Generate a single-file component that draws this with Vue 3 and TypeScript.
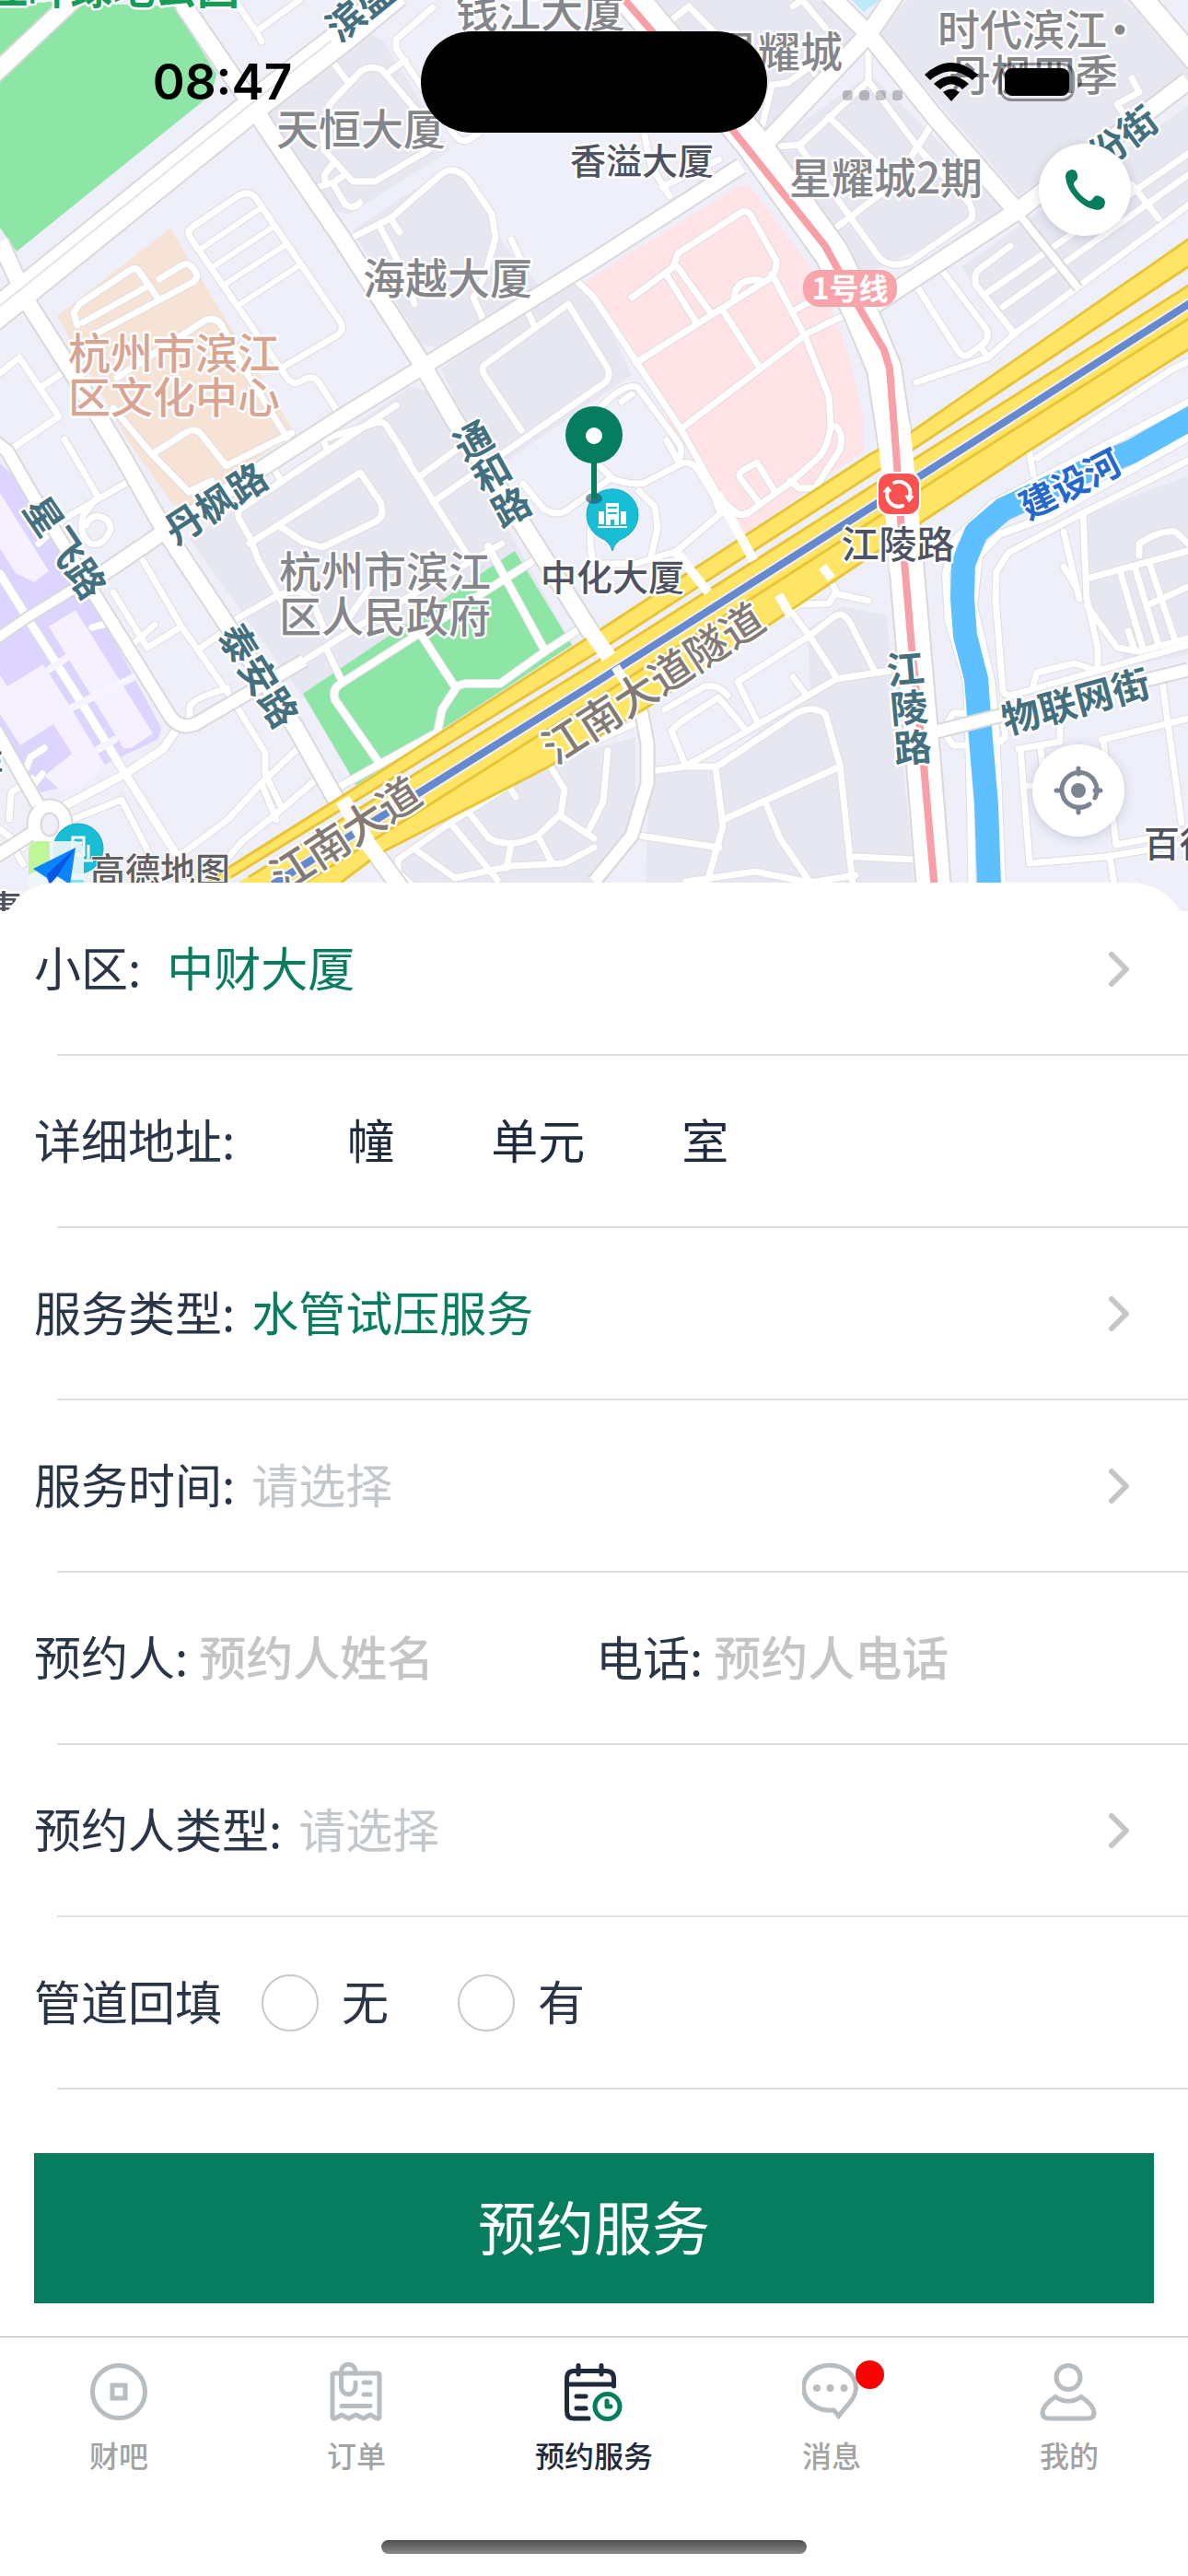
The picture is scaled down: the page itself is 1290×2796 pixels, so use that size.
<script setup lang="ts">
import { ref } from 'vue'

interface Area { fill: string; points: string }
interface Road { d: string; w: number }
interface Label { text: string; x: number; y: number; size: number; tone: string; angle?: number; anchor?: 'start' | 'middle' | 'end' }

const areas: Area[] = [
  { fill: '#e6e7f0', points: '296,117 403,38 415,43 489,163 378,233 362,227 288,123' },
  { fill: '#e6e7f0', points: '383,250 489,180 502,182 545,262 585,310 473,377 457,373' },
  { fill: '#e6e7f0', points: '479,400 617,305 640,310 686,407 550,500 520,490' },
  { fill: '#e6e7f0', points: '206,585 445,420 470,425 560,590 622,700 386,855 360,800' },
  { fill: '#e6e7f0', points: '705,0 890,0 935,40 825,150 760,60' },
  { fill: '#e6e7f0', points: '838,157 945,80 1093,227 935,300 884,217' },
  { fill: '#e6e7f0', points: '951,33 986,0 1221,0 1290,67 1290,90 1106,212' },
  { fill: '#e6e7f0', points: '1044,290 1290,115 1290,225 1106,363 1096,360' },
  { fill: '#e6e7f0', points: '877,683 915,658 940,664 962,667 990,920 993,989 700,989 705,840 777,832 880,748' },
  { fill: '#e6e7f0', points: '420,940 600,825 690,800 690,900 640,989 420,989' },
  { fill: '#e6e7f0', points: '1180,557 1290,517 1290,710 1225,723 1184,657' },
  { fill: '#bceaf8', points: '925,0 955,0 938,13' },
  { fill: '#ffe3e7', points: '636,305 800,203 811,201 820,209 875,283 900,330 920,380 937,450 937,490 805,583 740,480' },
  { fill: '#8de5a6', points: '0,0 189,7 235,80 230,102 18,273 0,247' },
  { fill: '#8de5a6', points: '329,753 559,598 621,700 387,852' },
  { fill: '#f7e3d6', points: '62,343 185,248 320,470 290,490 205,549 188,548 140,480' },
  { fill: '#ddd4ff', points: '0,503 16,518 107,663 175,790 172,802 60,856 45,860 37,853 0,800' },
  { fill: '#f5f1ff', points: '0,535 53,620 37,632 17,622 0,595' },
  { fill: '#f5f1ff', points: '53,680 82,662 166,796 142,812 134,812' },
  { fill: '#f5f1ff', points: '0,733 8,745 47,721 78,770 115,832 86,855 66,858 48,842 78,818 58,786 22,809 0,775' },
]

const minor: Road[] = [
  { w: 7, d: 'M470 8L430 43V53L494 147Q502 156 510 151L522 143' },
  { w: 7, d: 'M252 -4L280 37L284 45M280 33L325 0' },
  { w: 7, d: 'M358 63L376 87M452 120L415 76Q403 70 392 77L358 113L350 140L352 163L383 197H407L465 163M424 77L440 65' },
  { w: 7, d: 'M346 203L362 198L374 190M362 200L375 222Q384 228 391 220M362 177L352 190L354 200' },
  { w: 7, d: 'M378 260L424 237L478 190Q492 178 508 194L534 232L538 258L526 300L514 323L526 350' },
  { w: 7, d: 'M413 247L432 283L450 330M424 237L434 252M555 260L568 287' },
  { w: 7, d: 'M308 398L366 364Q374 358 370 350L277 214Q269 206 258 213L208 247Q202 252 208 260L313 412Q320 419 328 413Q340 406 346 415L370 452' },
  { w: 6, d: 'M218 270L280 228M232 289L294 248M245 308L308 267M261 330L325 288' },
  { w: 7, d: 'M84 353L80 340L86 330L140 294Q148 288 152 296L171 323M90 350L158 312M103 363L210 306Q217 300 211 293Q204 282 194 290L173 303' },
  { w: 7, d: 'M127 410L222 348Q236 342 243 357L263 397L313 477M123 443L165 493L203 469Q213 464 219 472L245 505M247 505L317 470M165 493L205 534L230 522' },
  { w: 7, d: 'M0 405L21 388L64 452L8 490M45 420L70 403M70 477L107 540M144 520L70 563L42 590' },
  { w: 7, d: 'M105 540L90 560Q85 580 98 590Q112 594 120 575Q120 562 105 560Q96 562 94 570' },
  { w: 7, d: 'M350 477L405 460Q416 455 421 464L444 500M350 475L356 490' },
  { w: 7, d: 'M617 330L526 396Q522 400 526 407L566 467M617 330L660 400Q664 412 653 418L470 545M570 333L580 353' },
  { w: 7, d: 'M621 300L645 323L740 467L781 540L816 604' },
  { w: 7, d: 'M645 450Q675 415 692 420L738 482Q742 492 736 500L724 478M675 436L686 428' },
  { w: 7, d: 'M723 27L748 7L790 50M861 7L871 0L896 30M838 93L826 143M838 92L855 90L880 72L888 86' },
  { w: 7, d: 'M943 37V88L900 128L869 157L834 160M943 88L999 163L1052 220Q1060 235 1052 240L988 284Q968 292 955 280L869 160' },
  { w: 7, d: 'M900 127L962 187M908 247L970 200L1015 130M727 213L707 180L700 147M719 203L781 173' },
  { w: 7, d: 'M686 323L731 290L736 275L804 231Q811 226 816 235L843 283Q844 294 836 302L690 394M723 297L756 350M736 290L772 340M785 337L824 398M838 297L875 367L900 430L902 463L908 463Q916 470 912 488L885 530H868L858 522' },
  { w: 7, d: 'M740 465L875 363L900 350L916 343M862 337L890 322M797 322Q800 302 825 304M902 463Q898 490 885 500L858 524L815 555Q803 563 795 553L781 540' },
  { w: 7, d: 'M1015 283L1071 357Q1075 366 1068 373L1052 385Q1046 388 1041 382L995 310M1065 377L1073 388L995 415M1073 388L1102 362L1290 223M1102 363L1060 310Q1056 297 1065 291L1097 267M1073 317L1290 167M1089 333L1290 190M1229 200L1258 237' },
  { w: 7, d: 'M1229 85L1237 100L1213 113L1221 125' },
  { w: 7, d: 'M1126 497L1274 400L1290 393M1114 470L1122 515' },
  { w: 7, d: 'M296 507L306 523M271 590L391 513L413 545Q419 560 408 566L350 594L329 588L302 570M310 660L280 607L273 587L259 562Q257 553 266 549L430 440M436 490L506 600M456 517L520 470' },
  { w: 7, d: 'M255 673L300 647Q330 634 340 655L355 690M330 717L400 673L545 590M354 703L370 737M372 680L400 640' },
  { w: 8, d: 'M411 827L364 760Q360 748 370 742L456 687L588 603M456 687L495 747L480 770L475 795L370 853M495 745L505 742H543L592 707L629 683M530 593L592 707' },
  { w: 9, d: 'M0 623L31 673L95 773L136 840L193 930L210 958M41 873L66 877L136 840L177 813L193 790' },
  { w: 7, d: 'M152 603L197 680L251 757L288 817V840L304 873M123 643L160 703L197 680M218 703L255 677M206 783V767Q210 758 247 747M140 703L168 678M100 681L116 677' },
  { w: 7, d: 'M193 930L247 890L284 850L329 807M225 958L263 913L304 880L350 840M284 850L300 890M32 857L46 840' },
  { w: 7, d: 'M70 893L132 868L178 958M0 900L25 920M10 889L12 860L35 845M25 938L12 915M568 525L590 552Q605 562 618 552L662 520' },
  { w: 7, d: 'M28 835L33 822L48 812' },
  { w: 7, d: 'M432 933L489 893L568 843L600 826L645 805L690 785M432 933V947L458 970M489 893L540 955M510 883L531 910Q555 922 584 907L609 883L613 857L590 820' },
  { w: 7, d: 'M452 923L494 953L555 940L613 937L645 920M555 917L550 942M584 907L600 938M609 886L645 910M542 838L560 865' },
  { w: 7, d: 'M707 837L744 832H777M744 832L805 797L908 737L966 728M744 830L729 793L740 783L780 757Q790 768 810 793M722 770L765 745Q780 742 790 755' },
  { w: 7, d: 'M822 783L801 740L879 690L908 735M847 648L879 690L905 670Q915 662 923 676L949 727M861 660L870 656L900 655L908 642L902 630M910 645L943 652M861 735L876 755' },
  { w: 7, d: 'M777 833L862 776Q880 764 896 775L912 830L929 989M777 833L785 897L768 957M785 890L912 832M694 907L781 920M832 873L847 910L879 957M745 957L820 946L879 958L929 950M929 930L995 933M660 815L655 870L640 900' },
  { w: 7, d: 'M651 506L666 520Q685 527 700 524L740 503Q750 500 757 509L776 540Q780 552 783 557M694 533L711 550L714 573L707 604M643 560Q638 590 645 612L690 612L735 598L783 557M735 600L768 642M822 543L803 518Q802 514 806 511L822 502L841 533' },
  { w: 8, d: 'M1290 437L1077 547L1036 587L1027 623L1030 673L1050 740L1052 790L1054 873L1056 989' },
  { w: 8, d: 'M1290 475L1140 560L1085 580L1063 603L1057 657L1077 743L1081 790L1089 989' },
  { w: 7, d: 'M1290 500L1170 560L1095 600L1082 620L1081 650L1089 750Q1094 758 1104 753L1290 700' },
  { w: 7, d: 'M1176 557L1180 650L1192 703V723M1155 577L1172 650M1155 615L1170 640M1184 627L1290 598M1217 623L1241 703M1233 618L1258 700M1249 614L1276 695M1237 603V590Q1260 575 1276 577L1290 590M1180 657L1213 703L1237 707L1290 693M1250 655L1290 637M1225 685L1232 705' },
  { w: 7, d: 'M1122 743L1126 730L1167 720L1188 727M1025 790L1035 774H1048M1025 795L1035 809H1052M1088 775L1092 800L1080 810' },
  { w: 7, d: 'M1106 813L1151 805V780M1108 813L1118 937L1200 930L1290 915M1130 812L1134 850M1112 853H1130M1196 803L1290 780M1262 740L1283 893M1198 803L1212 917L1290 902M1205 930L1215 989' },
]

const major: Road[] = [
  { w: 13, d: 'M-5 480L8 490L41 547L90 625L135 697L185 778Q195 792 212 786L330 717' },
  { w: 10, d: 'M-5 694L30 670L111 620' },
  { w: 16, d: 'M105 627L177 578L370 453L461 397L645 283L805 180' },
  { w: 13, d: 'M-5 792L41 873M-5 930L37 903M37 895A17 20 0 1 0 71 895A17 20 0 1 0 37 895' },
  { w: 17, d: 'M0 262L16 297L33 333L82 410L132 493L177 573L243 673L321 790L370 877L403 920L436 965' },
  { w: 18, d: 'M195 -8L201 8L255 87L276 117L288 137L370 257L457 393L494 457L568 570L642 687' },
  { w: 18, d: 'M830 157L943 37L975 -10M900 -6L943 37L1015 127L1102 227' },
  { w: 8, d: 'M1102 227L1171 313' },
  { w: 18, d: 'M950 330L1106 228L1290 88' },
  { w: 22, d: 'M1235 -8L1300 68' },
  { w: 13, d: 'M1005 797L1089 776L1290 727' },
  { w: 13, d: 'M680 740L697 775L703 807V850L686 907L645 957' },
  { w: 31, d: 'M-10 345L271 118L372 40L430 -8' },
  { w: 36, d: 'M674 -15L720 40L815 152L903 275L935 340L960 400L972 480L980 563L992 703L1003 830L1016 989' },
]

const crossings = 'M735 600L766 639M781 540L816 604M896 619L900 624M848 650L856 664M671 728L680 742'

const goldLines = [
  'M1300 253L988 470L945 493L645 688L378 860L251 940L225 958',
  'M1300 373L1116 490L949 601L707 765L596 832L411 927L370 958',
  'M1300 283L988 490L951 512L645 710L411 854L251 952',
  'M1300 304L993 498L645 720L270 952',
  'M1300 340L1056 495L645 760L456 880L325 962',
]

const labels: Label[] = [
  { text: '江畔绿地公园', x: 260, y: -13, size: 46, tone: 'park', anchor: 'end' },
  { text: '钱江大厦', x: 587, y: 12, size: 46, tone: 'grey' },
  { text: '天恒大厦', x: 392, y: 140, size: 46, tone: 'grey' },
  { text: '海越大厦', x: 486, y: 302, size: 46, tone: 'grey' },
  { text: '星耀城', x: 846, y: 56, size: 46, tone: 'grey' },
  { text: '时代滨江', x: 1110, y: 32, size: 46, tone: 'grey' },
  { text: '·', x: 1216, y: 32, size: 46, tone: 'grey' },
  { text: '丹枫四季', x: 1122, y: 81, size: 46, tone: 'grey' },
  { text: '星耀城2期', x: 962, y: 193, size: 46, tone: 'grey' },
  { text: '杭州市滨江', x: 189, y: 383, size: 46, tone: 'clay' },
  { text: '区文化中心', x: 189, y: 431, size: 46, tone: 'clay' },
  { text: '杭州市滨江', x: 418, y: 620, size: 46, tone: 'grey' },
  { text: '区人民政府', x: 418, y: 669, size: 46, tone: 'grey' },
  { text: '香溢大厦', x: 697, y: 174, size: 39, tone: 'dark' },
  { text: '中化大厦', x: 665, y: 626, size: 39, tone: 'dark' },
  { text: '江陵路', x: 975, y: 590, size: 41, tone: 'dark' },
  { text: '百得', x: 1242, y: 915, size: 39, tone: 'dark', anchor: 'start' },
  { text: '佳', x: -16, y: 820, size: 39, tone: 'dark' },
  { text: '事', x: 4, y: 985, size: 39, tone: 'dark' },
  { text: '滨盛', x: 391, y: 9, size: 41, tone: 'teal', angle: -39 },
  { text: '份街', x: 1219, y: 149, size: 41, tone: 'teal', angle: -37 },
  { text: '丹枫路', x: 234, y: 546, size: 41, tone: 'teal', angle: -33 },
  { text: '物联网街', x: 1168, y: 761, size: 41, tone: 'teal', angle: -15 },
  { text: '建设河', x: 1162, y: 525, size: 39, tone: 'river', angle: -27 },
  { text: '江南大道', x: 375, y: 905, size: 46, tone: 'brown', angle: -33 },
  { text: '江南大道隧道', x: 709, y: 741, size: 46, tone: 'brown', angle: -33 },
  { text: '通', x: 514, y: 478, size: 41, tone: 'teal', angle: -29 },
  { text: '和', x: 534, y: 513, size: 41, tone: 'teal', angle: -29 },
  { text: '路', x: 555, y: 550, size: 41, tone: 'teal', angle: -29 },
  { text: '星飞路', x: 71, y: 594, size: 41, tone: 'teal', angle: 56 },
  { text: '泰安路', x: 281, y: 733, size: 41, tone: 'teal', angle: 58 },
  { text: '江', x: 983, y: 726, size: 41, tone: 'teal', angle: -5 },
  { text: '陵', x: 987, y: 768, size: 41, tone: 'teal', angle: -5 },
  { text: '路', x: 991, y: 811, size: 41, tone: 'teal', angle: -5 },
]

const building = ref('')
const unit = ref('')
const room = ref('')
const contact = ref('')
const phone = ref('')
const backfill = ref('')
</script>

<template>
  <div class="page">
    <section class="map" aria-label="地图">
      <svg class="canvas" viewBox="0 0 1290 989" preserveAspectRatio="xMidYMid slice">
        <rect width="1290" height="989" fill="#eeeff8" />
        <polygon v-for="(a, i) in areas" :key="'a' + i" :points="a.points" :fill="a.fill" />

        <g fill="none" stroke-linejoin="round" stroke-linecap="round">
          <path v-for="(r, i) in minor" :key="'mc' + i" :d="r.d" stroke="#dddde2" :stroke-width="r.w + 2" />
          <path v-for="(r, i) in minor" :key="'mf' + i" :d="r.d" stroke="#fff" :stroke-width="r.w" />
          <path d="M54 726L74 713M78 768L145 735M107 813L124 803" stroke="#f7f4ff" stroke-width="8" />
        </g>
        <g fill="none" stroke-linejoin="round">
          <path d="M1300 450L1229 490L1159 520L1089 553L1060 578L1046 612L1045 650L1048 690L1060 737L1064 790L1071 873L1075 989" stroke="#5ec0ff" stroke-width="26" />
          <path v-for="(r, i) in major" :key="'jc' + i" :d="r.d" stroke="#d9d9dc" :stroke-width="r.w + 4" />
          <path v-for="(r, i) in major" :key="'jf' + i" :d="r.d" stroke="#fff" :stroke-width="r.w" />
          <path d="M-10 340L271 114L360 44" stroke="#e3e3e3" stroke-width="2" />
          <path d="M-10 84L88 -8" stroke="#d5d9d5" stroke-width="22" />
          <path d="M-10 84L88 -8" stroke="#fff" stroke-width="18" />
        </g>

        <!-- expressway -->
        <polygon fill="#ffe566" points="1300,253 988,470 945,493 645,688 378,860 251,940 205,970 350,970 411,927 596,832 707,765 949,601 1116,490 1300,373" />
        <polygon fill="#eeeff8" points="1300,283 988,490 645,710 411,854 240,960 255,960 415,864 645,720 993,498 1300,304" />
        <g fill="none" stroke="#e9c536" stroke-width="3">
          <path v-for="(d, i) in goldLines" :key="'g' + i" :d="d" />
        </g>
        <path d="M1300 324L1041 490L645 742L296 960" fill="none" stroke="#eeeff8" stroke-width="12" />
        <path d="M1300 324L1041 490L645 742L296 960" fill="none" stroke="#6688cc" stroke-width="8" />
        <path :d="crossings" fill="none" stroke="#fff" stroke-width="10" stroke-linecap="square" />
        <path d="M636 677L661 713M372 868L400 916L436 965" fill="none" stroke="#fff" stroke-width="17" />
        <path d="M970 462L974 500L980 563L984 620" fill="none" stroke="#fff" stroke-width="36" />

        <path d="M676 -3L707 33L797 143L896 267L929 327L960 380L966 400L973 490L978 563L990 703L1003 830L1017 989" fill="none" stroke="#f99fa6" stroke-width="8" />
        <rect x="872" y="293" width="102" height="40" rx="18" fill="#f9a4aa" />
        <text class="tag" x="923" y="313" dy=".38em">1号线</text>

        <!-- metro stop -->
        <rect x="952" y="512" width="48" height="48" rx="13" fill="#fff" />
        <rect x="954" y="514" width="44" height="44" rx="12" fill="#fa5151" />
        <path d="M971 524A12.500 12.500 0 0 1 988 539M980 549A12.500 12.500 0 0 1 964 533" fill="none" stroke="#fff" stroke-width="4" stroke-linecap="round" />
        <path d="M983 538L992 539L987 545ZM959 534L968 533L964 528Z" fill="#fff" stroke="#fff" stroke-linejoin="round" />

        <!-- office markers -->
        <path d="M665 598Q663 588 651 583A28 28 0 1 1 679 583Q667 588 665 598Z" fill="#18bdd6" stroke="#16aac2" stroke-width="1" />
        <path d="M658 546H672V570H667V564H663V570H658ZM650 555H656V569H650ZM674 555H680V569H674ZM649 571H681V573H649Z" fill="#fff" />
        <path d="M660 551H670M660 557H670" stroke="#18bdd6" stroke-width="2" />
        <circle cx="85" cy="921" r="27" fill="#18bdd6" stroke="#16aac2" stroke-width="1" />
        <path d="M79 909H91V928H79ZM81 915H89M96 917V932M90 934H101" fill="none" stroke="#fff" stroke-width="3" />

        <text v-for="(l, i) in labels" :key="'l' + i" class="poi" :class="l.tone" :x="l.x" :y="l.y" dy=".38em"
          :font-size="l.size" :text-anchor="l.anchor ?? 'middle'"
          :transform="l.angle ? `rotate(${l.angle} ${l.x} ${l.y})` : undefined">{{ l.text }}</text>

        <!-- map provider mark -->
        <rect x="31" y="913" width="60" height="60" rx="10" fill="#f1f6f9" opacity=".9" />
        <path d="M41 913H54V938L31 950V923Q31 913 41 913Z" fill="#c0f79a" />
        <path d="M74 955H91V970H74Z" fill="#80e4fa" />
        <path d="M82 920L36 943L51 953L54 960L62 951L76 960Z" fill="#0a84ff" />
        <path d="M82 920L51 949L54 960L62 951Z" fill="#0757e6" />
        <text class="poi provider" x="98" y="944" dy=".38em" font-size="38">高德地图</text>

        <!-- selected place pin -->
        <ellipse cx="645" cy="541" rx="9" ry="6" fill="#24475a" opacity=".6" />
        <path d="M645 500V541" stroke="#067d5f" stroke-width="6" />
        <circle cx="645" cy="472" r="31" fill="#067d5f" />
        <circle cx="645" cy="473" r="9" fill="#fff" />
      </svg>

      <div class="cap"></div>

      <header class="status">
        <time class="clock">08:47</time>
        <div class="island"></div>
        <div class="signals">
          <svg class="cells" viewBox="0 0 66 12"><g fill="#000" opacity=".22"><rect width="11" height="11" rx="4" /><rect x="18" width="11" height="11" rx="4" /><rect x="36" width="11" height="11" rx="4" /><rect x="54" width="11" height="11" rx="4" /></g></svg>
          <svg class="wifi" viewBox="0 0 58 42">
            <path d="M0 13Q29 -13 58 13L52 19Q29 0 6 19Z" />
            <path d="M10 23Q29 6 48 23L41 29Q29 18 17 29Z" />
            <path d="M20 32Q29 25 38 32L29 42Z" />
          </svg>
          <svg class="battery" viewBox="0 0 92 42">
            <rect x="1.500" y="1.500" width="79" height="39" rx="12" fill="none" stroke="#000" stroke-opacity=".4" stroke-width="3" />
            <rect x="6" y="6" width="70" height="30" rx="8" />
            <path d="M85 14Q90 16 90 21T85 28Z" fill-opacity=".45" />
          </svg>
        </div>
      </header>

      <button class="round call" type="button" aria-label="拨打电话">
        <svg viewBox="0 0 44 44" width="44" height="44">
          <path fill="#067d5f" d="M1 8Q1 1 8 0Q13 0 14 6Q15 11 11 13Q9 15 11 19Q17 29 26 34Q29 35 31 31Q33 27 38 29Q44 31 44 36Q43 44 35 44Q22 42 12 31Q2 20 1 8Z" />
        </svg>
      </button>
      <button class="round locate" type="button" aria-label="定位">
        <svg viewBox="0 0 54 54" width="54" height="54" fill="none" stroke="#7c8492" stroke-width="5" stroke-linecap="round">
          <path d="M45 35A19 19 0 1 0 39 42M27 3V9M27 45V51M3 27H9M45 27H51" />
          <circle cx="27" cy="27" r="8" fill="#7c8492" stroke="none" />
        </svg>
      </button>
    </section>

    <form class="sheet" @submit.prevent>
      <div class="row">
        <label for="estate">小区:</label>
        <button id="estate" class="pick wide chosen" type="button">中财大厦
          <svg class="chevron" viewBox="0 0 24 38"><path d="M4 3L20 19L4 35" /></svg>
        </button>
      </div>
      <div class="row address">
        <label for="building">详细地址:</label>
        <input id="building" v-model="building" class="part first" type="text" />
        <label for="building">幢</label>
        <input id="unit" v-model="unit" class="part" type="text" />
        <label for="unit">单元</label>
        <input id="room" v-model="room" class="part" type="text" />
        <label for="room">室</label>
      </div>
      <div class="row">
        <label for="kind">服务类型:</label>
        <button id="kind" class="pick chosen" type="button">水管试压服务
          <svg class="chevron" viewBox="0 0 24 38"><path d="M4 3L20 19L4 35" /></svg>
        </button>
      </div>
      <div class="row">
        <label for="time">服务时间:</label>
        <button id="time" class="pick" type="button">请选择
          <svg class="chevron" viewBox="0 0 24 38"><path d="M4 3L20 19L4 35" /></svg>
        </button>
      </div>
      <div class="row people">
        <div class="half">
          <label for="contact">预约人:</label>
          <input id="contact" v-model="contact" class="field" type="text" placeholder="预约人姓名" />
        </div>
        <div class="half">
          <label for="phone">电话:</label>
          <input id="phone" v-model="phone" class="field" type="tel" placeholder="预约人电话" />
        </div>
      </div>
      <div class="row">
        <label for="role">预约人类型:</label>
        <button id="role" class="pick" type="button">请选择
          <svg class="chevron" viewBox="0 0 24 38"><path d="M4 3L20 19L4 35" /></svg>
        </button>
      </div>
      <div class="row" role="radiogroup" aria-labelledby="backfill">
        <span id="backfill">管道回填</span>
        <label class="option"><input v-model="backfill" type="radio" name="backfill" value="no" />无</label>
        <label class="option"><input v-model="backfill" type="radio" name="backfill" value="yes" />有</label>
      </div>
      <button class="submit" type="submit">预约服务</button>
    </form>

    <nav class="tabs">
      <a href="#home" class="tab">
        <svg viewBox="0 0 64 64"><circle cx="32" cy="32" r="28.500" /><rect x="25" y="25" width="14" height="14" /></svg>
        财吧
      </a>
      <a href="#orders" class="tab">
        <svg viewBox="0 0 64 64" stroke-linecap="round" stroke-linejoin="round">
          <path d="M6 14Q6 12 8 12H55Q57 12 57 14V59Q57 62 54 61L47 57L39.500 61L31.500 57L23.500 61L16 57L9 61Q6 62 6 59Z" />
          <path d="M31 11V10A7.750 7.750 0 0 0 15.500 10V27A7.750 7.750 0 0 0 31 27V22M40 22H47M40 35H47M16 47.500H47" />
        </svg>
        订单
      </a>
      <a href="#booking" class="tab active" aria-current="page">
        <svg viewBox="0 0 64 64" stroke-linecap="round" stroke-linejoin="round">
          <path d="M26 61H10Q2.500 61 2.500 53V18Q2.500 9.500 10 9.500H45Q53.500 9.500 53.500 18V26M2.500 24H53.500M15 3.500V13M40 3.500V13M13 37H23M13 50H23" />
          <g stroke="#067d5f"><circle cx="46.500" cy="48" r="13.500" /><path d="M46 42V48H50" /></g>
        </svg>
        预约服务
      </a>
      <a href="#messages" class="tab">
        <span class="badged">
          <svg viewBox="0 0 64 64">
            <path d="M33 52A28.500 24.500 0 1 1 58.500 28C58.500 39 49 46 39.500 58.500L34.500 52Z" />
            <g fill="#b7bdc1" stroke="none"><circle cx="16" cy="28" r="4" /><circle cx="30.500" cy="28" r="4" /><circle cx="45.500" cy="28" r="4" /></g>
          </svg>
          <i class="badge"></i>
        </span>
        消息
      </a>
      <a href="#me" class="tab">
        <svg viewBox="0 0 64 64">
          <circle cx="31" cy="16.500" r="13" />
          <path d="M17 37.500Q31 47 45 37.500C52 42 59 49 59 55Q59 61 52 61H10Q3 61 3 55C3 49 10 42 17 37.500Z" />
        </svg>
        我的
      </a>
    </nav>
    <div class="home-bar"></div>
  </div>
</template>

<style>
body {
  margin: 0;
  background: #fff;
}
</style>

<style scoped>
.page {
  --green: #067d5f;
  display: flex;
  flex-direction: column;
  min-height: 100vh;
  background: #fff;
  color: #2a3548;
  font-family: "Noto Sans CJK SC", sans-serif;
  font-size: 51px;
  line-height: 72px;
}
button,
input {
  font: inherit;
  color: inherit;
  border: 0;
  padding: 0;
  margin: 0;
  background: none;
  outline: 0;
}
.map {
  position: relative;
  width: 100%;
  aspect-ratio: 1290 / 989;
  overflow: hidden;
}
.canvas {
  display: block;
  width: 100%;
  height: 100%;
}
.poi {
  font-weight: 500;
  paint-order: stroke;
  stroke: #fff;
  stroke-width: 5px;
  stroke-linejoin: round;
}
.grey { fill: #85868c; }
.dark { fill: #4f5262; }
.clay { fill: #d8a494; }
.teal { fill: #436f7e; font-weight: 700; }
.river { fill: #2468cc; font-weight: 700; }
.brown { fill: #837a73; }
.park { fill: #169c58; font-weight: 700; }
.provider { fill: #606060; stroke-width: 2px; }
.tag {
  fill: #fff;
  font-size: 32px;
  font-weight: 700;
  text-anchor: middle;
}
.cap {
  position: absolute;
  left: 0;
  right: 0;
  bottom: -31px;
  height: 62px;
  border-radius: 62px 62px 0 0;
  background: #fff;
}
.status {
  position: absolute;
  top: 34px;
  left: 0;
  right: 0;
  display: grid;
  grid-template-columns: 1fr 376px 1fr;
  align-items: center;
  justify-items: center;
}
.clock {
  padding-left: 26px;
  color: #000;
  font-family: Inter, sans-serif;
  font-size: 53px;
  font-weight: 600;
}
.island {
  width: 376px;
  height: 110px;
  border-radius: 55px;
  background: #000;
}
.signals {
  display: flex;
  align-items: flex-end;
  gap: 23px;
  padding-right: 32px;
}
.cells { width: 66px; height: 12px; }
.wifi { width: 58px; height: 42px; }
.battery { width: 92px; height: 42px; }
.round {
  position: absolute;
  display: grid;
  place-items: center;
  width: 100px;
  height: 100px;
  border-radius: 50%;
  background: #fff;
  box-shadow: 0 2px 12px rgba(60, 70, 110, .22);
}
.call { top: 156px; right: 62px; }
.locate { top: 808px; right: 69px; }

.sheet {
  position: relative;
  display: flex;
  flex-direction: column;
  margin-top: -31px;
}
.row {
  position: relative;
  box-sizing: border-box;
  display: flex;
  align-items: center;
  height: 187px;
  padding: 0 0 6px 37px;
}
.row::after {
  content: "";
  position: absolute;
  left: 62px;
  right: 0;
  bottom: -1px;
  height: 2px;
  background: #dedee0;
}
.pick {
  display: flex;
  flex: 1;
  align-items: center;
  justify-content: space-between;
  padding: 0 63px 0 18px;
  color: #c3c8cc;
  text-align: left;
}
.wide { padding-left: 28px; }
.chosen { color: var(--green); }
.chevron {
  width: 24px;
  height: 38px;
  margin-top: 6px;
  fill: none;
  stroke: #c5c6c7;
  stroke-width: 6;
  stroke-linecap: round;
  stroke-linejoin: round;
}
.part {
  width: 105px;
  text-align: center;
}
.first { width: 122px; }
.address label + input + label { color: #1f2a3f; }
.people { padding-left: 0; }
.half {
  box-sizing: border-box;
  display: flex;
  width: 50%;
  padding-left: 37px;
}
.half + .half { padding-left: 2px; }
.field {
  flex: 1;
  min-width: 0;
  padding-left: 12px;
}
.field::placeholder {
  color: #c5c5c7;
  font-weight: 500;
  opacity: 1;
}
.option {
  display: flex;
  align-items: center;
  gap: 25px;
  margin-left: 43px;
}
.option + .option { margin-left: 75px; }
.option input {
  appearance: none;
  width: 62px;
  height: 62px;
  margin-top: 6px;
  border: 2px solid #c6c9cd;
  border-radius: 50%;
}
.option input:checked {
  border: 18px solid var(--green);
}
.submit {
  height: 163px;
  margin: 70px 37px 36px;
  padding-bottom: 8px;
  background: var(--green);
  color: #fff;
  font-size: 63px;
}
.tabs {
  display: grid;
  grid-template-columns: repeat(5, 1fr);
  padding-top: 27px;
  border-top: 1px solid #b0b0b0;
}
.tab {
  display: flex;
  flex-direction: column;
  align-items: center;
  gap: 16px;
  color: #a3a3a3;
  font-size: 32px;
  font-weight: 500;
  line-height: 40px;
  text-decoration: none;
}
.tab svg {
  display: block;
  width: 64px;
  height: 64px;
  fill: none;
  stroke: #b7bdc1;
  stroke-width: 5;
}
.tab.active { color: #1f2a3c; }
.tab.active svg { stroke: #1f2a3c; }
.badged { position: relative; }
.badge {
  position: absolute;
  top: -2px;
  left: 58px;
  width: 31px;
  height: 31px;
  border-radius: 50%;
  background: #f00;
}
.home-bar {
  width: 462px;
  height: 15px;
  margin: 73px auto 24px;
  border-radius: 8px;
  background: linear-gradient(#505050, #888);
}
</style>
